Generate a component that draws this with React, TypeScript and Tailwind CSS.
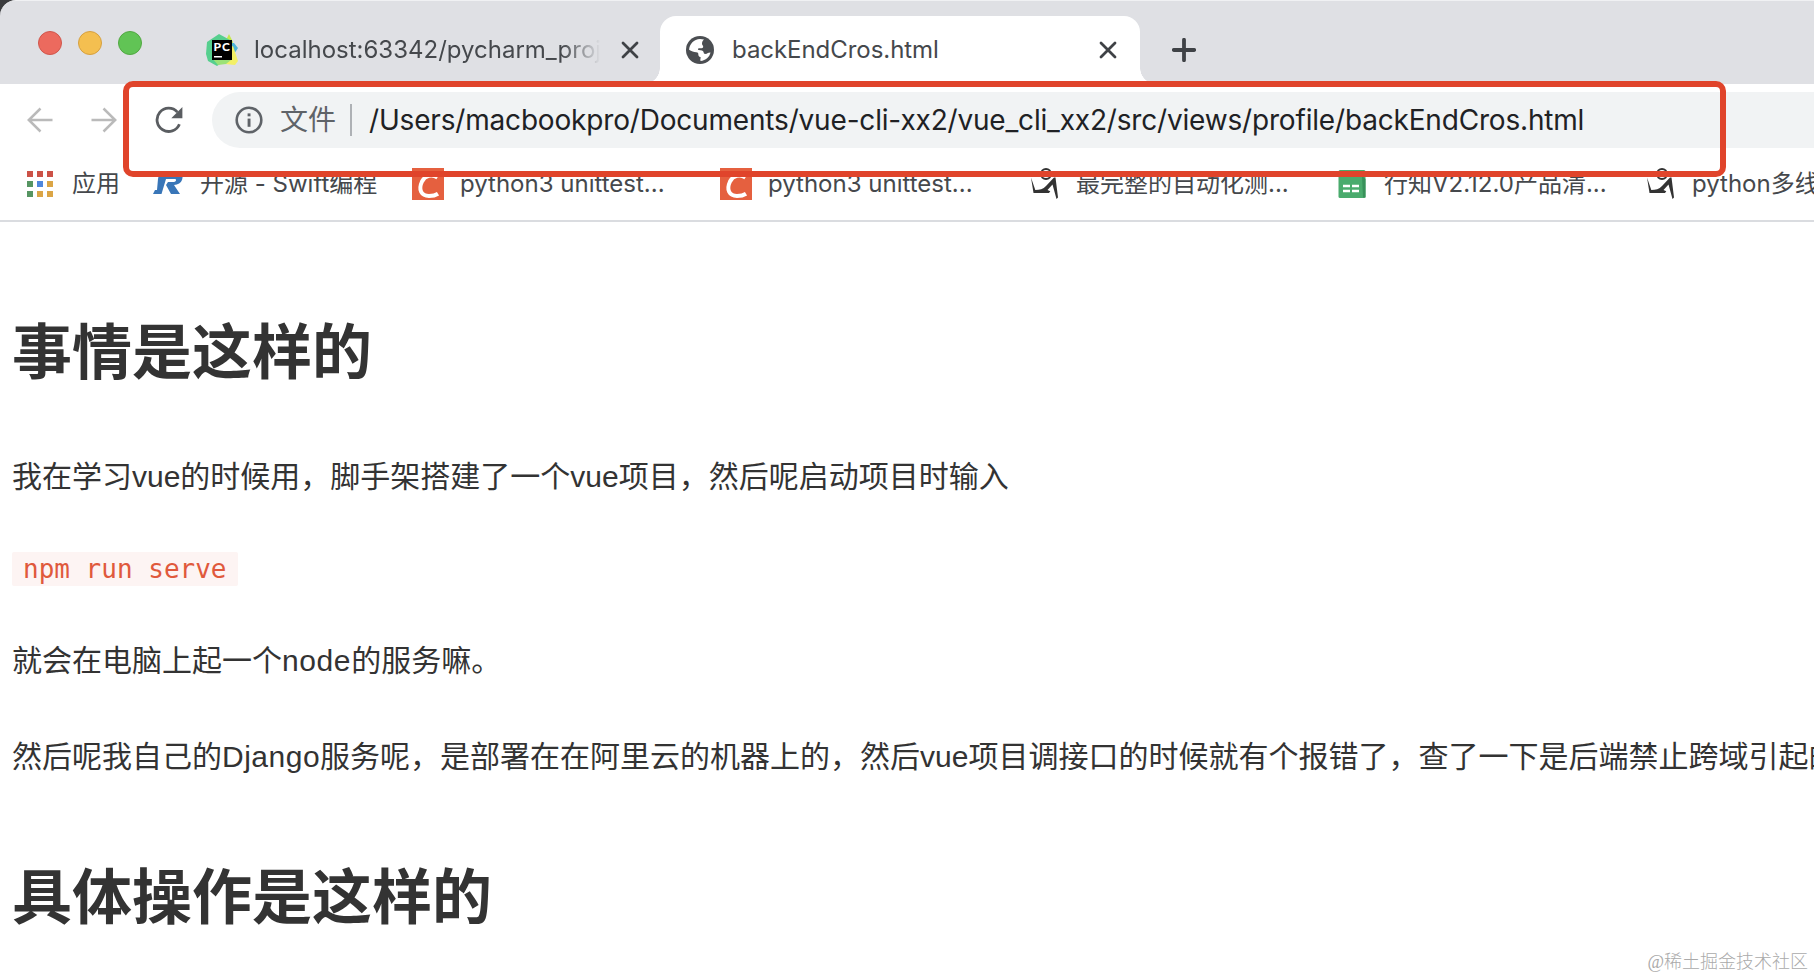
import React from "react";

interface Bookmark {
  title: string;
  icon: React.ReactNode;
  width: string;
}

const TrafficLights: React.FC = () => (
  <div className="flex h-[84px] items-center gap-4 pl-[38px]">
    <span className="size-6 rounded-full border border-[#d0564c] bg-[#ec6a5e]" />
    <span className="size-6 rounded-full border border-[#d6a040] bg-[#f4bf50]" />
    <span className="size-6 rounded-full border border-[#52a842] bg-[#61c455]" />
  </div>
);

const PyCharmIcon: React.FC = () => (
  <svg className="h-8 w-8 shrink-0" viewBox="0 0 32 32">
    <path d="M19 8 23 0 27 8 26 14z" fill="#c5e84f" />
    <path d="M25 9 28 9 32 14 28 20z" fill="#4fb4d8" />
    <path d="M16 18 27 12 32 27 29 31 19 30z" fill="#f3f066" />
    <path d="M1 8 13 0 24 6 20 26 11 32 2 27 0 20z" fill="#56cf8e" />
    <path d="M6 24 25 26 20 30 12 31z" fill="#9be277" />
    <rect x="6" y="6" width="20" height="20" fill="#000" />
    <text
      x="7.4"
      y="16.8"
      fill="#fff"
      fontFamily="Lato, sans-serif"
      fontWeight="900"
      fontSize="12"
      textLength="16.5"
    >
      PC
    </text>
    <rect x="8" y="22" width="8" height="1.5" fill="#fff" />
  </svg>
);

const GlobeIcon: React.FC = () => (
  <svg className="h-7 w-7 shrink-0" viewBox="0 0 28 28">
    <circle cx="14" cy="14" r="14" fill="#4b4e52" />
    <path
      d="M18 3.6c-1.600 1.500-1.900 2.500-2 4.200-.1 1.400 1.200 1.300 1.200 2.900 0 1.800-2.200 1.500-4.100 1.500-1.600 0-1.400 1.800-.4 1.900 2.400.3 4.800.5 5 2.500.1 1.200.6 1.400 2.100 1.400 1.200 0 1.600-1.100 4.700-1.400C23.600 21 19.700 24.800 14.600 25c-.5-1.500-.2-2.600.3-3.600-1.600-.4-2.600-1.500-2.600-3.200 0-1.500-.5-1.500-2-1.900-2.600-.5-4.800-1.200-7.200-2.600C3.300 8.100 8 3.100 14 3c1.500 0 2.700.2 4 .6z"
      fill="#fff"
    />
  </svg>
);

const CloseIcon: React.FC = () => (
  <svg className="h-[18px] w-[18px] shrink-0" viewBox="0 0 18 18">
    <path
      d="M2 2l14 14M16 2L2 16"
      stroke="#3f4246"
      strokeWidth="2.800"
      strokeLinecap="round"
    />
  </svg>
);

const PlusIcon: React.FC = () => (
  <svg className="h-6 w-6" viewBox="0 0 24 24">
    <path
      d="M12 1.800v20.400M1.800 12h20.400"
      stroke="#3f4246"
      strokeWidth="3.800"
      strokeLinecap="round"
    />
  </svg>
);

const ArrowIcon: React.FC<{ className?: string }> = ({ className = "" }) => (
  <svg className={`h-[26px] w-[26px] ${className}`} viewBox="0 0 26 26">
    <path
      d="M25.500 13H2M13.500 1.500L1.800 13l11.700 11.500"
      fill="none"
      stroke="#bababa"
      strokeWidth="2.500"
    />
  </svg>
);

const ReloadIcon: React.FC = () => (
  <svg className="h-7 w-7" viewBox="0 0 28 28">
    <path
      d="M24.400 18.200A11.600 11.600 0 1 1 22.400 6.200"
      fill="none"
      stroke="#5a5d61"
      strokeWidth="2.800"
    />
    <path d="M27.400 1v11.200H16.300z" fill="#5a5d61" />
  </svg>
);

const InfoIcon: React.FC = () => (
  <svg className="h-7 w-7 shrink-0" viewBox="0 0 28 28">
    <circle cx="14" cy="14" r="12.300" fill="none" stroke="#5f6368" strokeWidth="2.600" />
    <rect x="12.600" y="7.400" width="2.900" height="2.900" fill="#5f6368" />
    <rect x="12.600" y="12.600" width="2.900" height="8.200" fill="#5f6368" />
  </svg>
);

const appColors = [
  "bg-[#cc5247]",
  "bg-[#cc5247]",
  "bg-[#cc5247]",
  "bg-[#569562]",
  "bg-[#4f87dd]",
  "bg-[#dba546]",
  "bg-[#569562]",
  "bg-[#dba546]",
  "bg-[#dba546]",
];

const AppsIcon: React.FC = () => (
  <div className="grid grid-cols-3 gap-1">
    {appColors.map((color, index) => (
      <span key={index} className={`size-1.5 ${color}`} />
    ))}
  </div>
);

const RunoobIcon: React.FC = () => (
  <svg className="h-8 w-8 shrink-0" viewBox="0 0 32 32">
    <path
      d="M7 6h21c3 0 3 3 2 6-1 3-4 4.500-8 5l6 9h-9l-5-9 2-3h6c2 0 3-3 1-3H6z"
      fill="#3976b8"
    />
    <path d="M6 11h8L9.500 26H1l2-4h2z" fill="#3976b8" />
  </svg>
);

const CsdnIcon: React.FC = () => (
  <svg className="h-8 w-8 shrink-0" viewBox="0 0 32 32">
    <rect width="32" height="32" fill="#e5603f" />
    <path
      d="M25.500 9.500C20 5.800 13 7.500 10 13.500 6 22 9.500 28 17 28c4 0 6.800-.8 9-2.200"
      fill="none"
      stroke="#fff"
      strokeWidth="4"
    />
  </svg>
);

const FigureIcon: React.FC = () => (
  <svg className="h-8 w-8 shrink-0" viewBox="0 0 32 32">
    <circle cx="18" cy="6" r="5" fill="none" stroke="#333" strokeWidth="2" />
    <path
      d="M3 9.500l4.300 12.500c4.200 0 8-1 10.700-4L26 9.500h1.500l2.500 20-1.500 1.500-4-14.500-5 5.500 2.800 1.300-1.300 1.700H5.500z"
      fill="#333"
    />
  </svg>
);

const SheetIcon: React.FC = () => (
  <svg className="h-8 w-8 shrink-0" viewBox="0 0 32 32">
    <rect x="2.500" y="2" width="27" height="28" rx="1.500" fill="#4aab6d" />
    <path d="M26 8l3.500 3v18.500H27z" fill="#38915a" />
    <path
      d="M7 18h7M16 18h7M7 23h7M16 23h7"
      stroke="#fff"
      strokeWidth="2.600"
    />
  </svg>
);

const bookmarks: Bookmark[] = [
  { title: "开源 - Swift编程", icon: <RunoobIcon />, width: "w-[260px]" },
  { title: "python3 unittest...", icon: <CsdnIcon />, width: "w-[308px]" },
  { title: "python3 unittest...", icon: <CsdnIcon />, width: "w-[308px]" },
  { title: "最完整的自动化测...", icon: <FigureIcon />, width: "w-[308px]" },
  { title: "行知V2.12.0产品清...", icon: <SheetIcon />, width: "w-[308px]" },
  { title: "python多线程...", icon: <FigureIcon />, width: "w-[308px]" },
];

const TabStrip: React.FC = () => (
  <div className="flex h-[84px] rounded-tl-[16px] border-t border-[#f0f1f3] bg-[#dfe0e4]">
    <TrafficLights />
    <div className="ml-16 flex h-[83px] w-[454px] items-start pt-[33px]">
      <PyCharmIcon />
      <div className="ml-4 w-[350px] overflow-hidden mask-r-from-88% mask-r-to-99% text-[24px] leading-8 whitespace-nowrap text-[#45484c]">
        localhost:63342/pycharm_project
      </div>
      <div className="mt-[7px] ml-[17px]">
        <CloseIcon />
      </div>
    </div>
    <div className="relative mt-[15px] flex h-[68px] w-[480px] items-center rounded-t-[16px] bg-white pl-[26px]">
      <span className="absolute bottom-0 -left-4 size-4 bg-[radial-gradient(circle_at_0_0,transparent_15.5px,white_16px)]" />
      <span className="absolute -right-4 bottom-0 size-4 bg-[radial-gradient(circle_at_100%_0,transparent_15.5px,white_16px)]" />
      <GlobeIcon />
      <div className="ml-[18px] flex-1 text-[24px] leading-8 tracking-[-0.05px] text-[#45484c]">
        backEndCros.html
      </div>
      <div className="mr-[23px]">
        <CloseIcon />
      </div>
    </div>
    <div className="mt-[37px] ml-8">
      <PlusIcon />
    </div>
  </div>
);

const Toolbar: React.FC = () => (
  <div className="flex h-[72px] items-center">
    <div className="flex w-[212px] shrink-0 items-center">
      <ArrowIcon className="ml-[27px]" />
      <ArrowIcon className="ml-[38px] rotate-180" />
      <div className="ml-[38px]">
        <ReloadIcon />
      </div>
    </div>
    <div className="flex h-14 flex-1 items-center rounded-l-full bg-[#f1f3f4] pl-[23px] text-[28px] whitespace-nowrap">
      <InfoIcon />
      <span className="ml-[17px] text-[#5f6368]">文件</span>
      <span className="mr-[17px] ml-[14px] h-8 w-0.5 bg-[#aeb1b5]" />
      <span className="tracking-[-0.18px] text-[#202124]">
        /Users/macbookpro/Documents/vue-cli-xx2/vue_cli_xx2/src/views/profile/backEndCros.html
      </span>
    </div>
  </div>
);

const BookmarksBar: React.FC = () => (
  <div className="flex h-[66px] items-center overflow-hidden border-b-2 border-[#dadce0] pb-2 text-[24px] whitespace-nowrap text-[#45484c]">
    <div className="flex w-[152px] shrink-0 items-center pl-[27px]">
      <AppsIcon />
      <span className="ml-[19px]">应用</span>
    </div>
    {bookmarks.map((bookmark, index) => (
      <div
        key={index}
        className={`flex shrink-0 items-center gap-4 ${bookmark.width}`}
      >
        {bookmark.icon}
        <span>{bookmark.title}</span>
      </div>
    ))}
  </div>
);

const App: React.FC = () => {
  return (
    <div className="relative h-[978px] w-[1814px] overflow-hidden bg-white font-[Inter,'Noto_Sans_CJK_SC',sans-serif]">
      <div className="bg-[#3a3b3d]">
        <TabStrip />
      </div>
      <Toolbar />
      <BookmarksBar />

      <main className="px-3 pt-[84px] font-['Liberation_Sans','Noto_Sans_CJK_SC',sans-serif] text-[30px] leading-[54px] whitespace-nowrap text-[#333]">
        <h1 className="text-[60px] leading-[96px] font-bold">事情是这样的</h1>
        <p className="mt-[48px]">
          我在学习vue的时候用，脚手架搭建了一个vue项目，然后呢启动项目时输入
        </p>
        <p className="mt-[37px]">
          <code className="rounded-xs bg-[#fdf4f3] px-[11px] py-[2px] font-['DejaVu_Sans_Mono',monospace] text-[26px] text-[#e0593c]">
            npm run serve
          </code>
        </p>
        <p className="mt-[38px]">
          就会在电脑上起一个<span className="tracking-[0.6px]">node</span>
          的服务嘛。
        </p>
        <p className="mt-[42px]">
          然后呢我自己的<span className="tracking-[0.5px]">Django</span>
          服务呢，是部署在在阿里云的机器上的，然后vue项目调接口的时候就有个报错了，查了一下是后端禁止跨域引起的
        </p>
        <h1 className="mt-[67px] text-[60px] leading-[96px] font-bold">
          具体操作是这样的
        </h1>
      </main>

      {/* highlight around the address bar */}
      <div className="absolute top-[81px] left-[123px] h-[96px] w-[1603px] rounded-[10px] border-6 border-[#e0442b]" />

      <div className="absolute right-[6px] bottom-[4px] font-['Liberation_Serif','Noto_Sans_CJK_SC',serif] text-[18px] leading-6 font-light text-[#aaa]">
        @稀土掘金技术社区
      </div>
    </div>
  );
};

export default App;
